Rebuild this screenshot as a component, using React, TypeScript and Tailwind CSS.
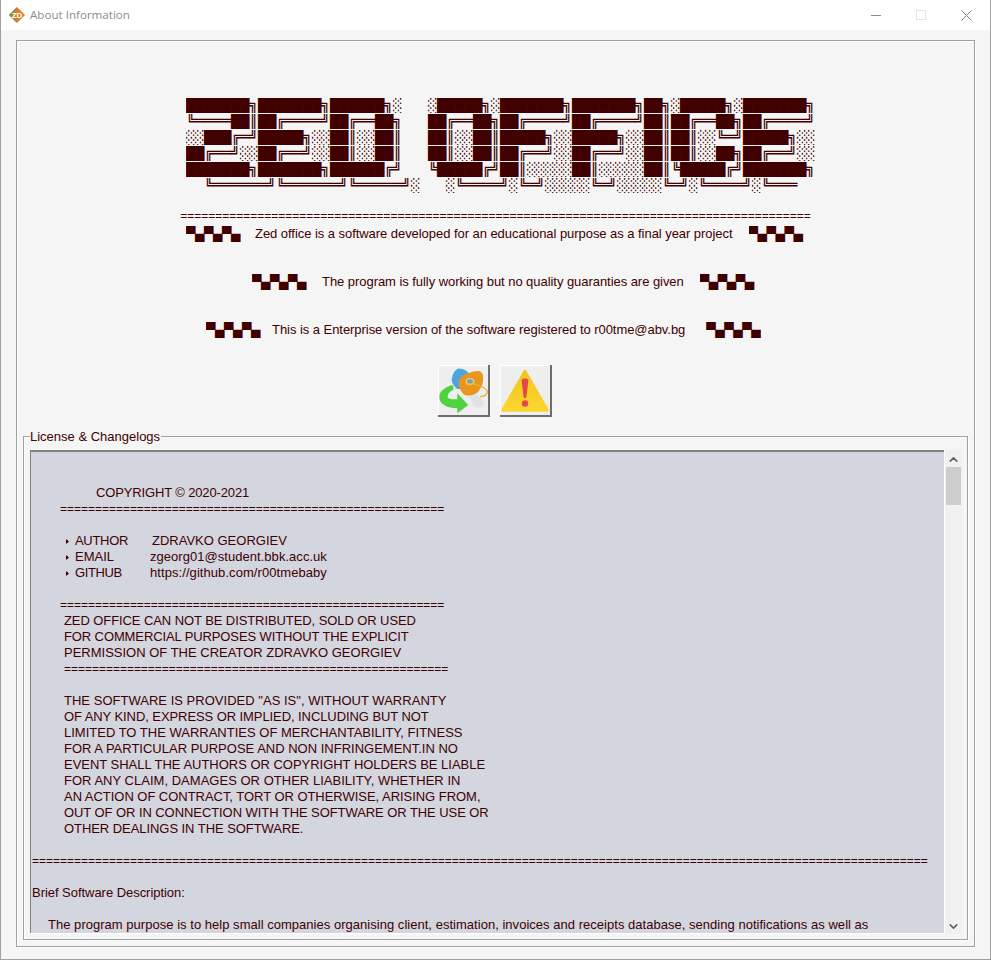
import { ChevronUp, ChevronDown } from 'lucide-react';

// each row is [ZED, OFFICE], the word gap is a bit narrower than 3 cells
const LOGO: [string, string, string][] = [
  ['███████╗███████╗██████╗░', '░█████╗░███████╗███████╗██╗░█████╗░███████╗', ''],
  ['╚════██║██╔════╝██╔══██╗', '██╔══██╗██╔════╝██╔════╝██║██╔══██╗██╔════╝', ''],
  ['░░███╔═╝█████╗░░██║░░██║', '██║░░██║█████╗░░█████╗░░██║██║░░╚═╝█████╗░░', ''],
  ['██╔══╝░░██╔══╝░░██║░░██║', '██║░░██║██╔══╝░░██╔══╝░░██║██║░░██╗██╔══╝░░', ''],
  ['███████╗███████╗██████╔╝', '╚█████╔╝██║░░░░░██║░░░░░██║╚█████╔╝███████╗', ''],
  ['╚══════╝╚══════╝╚═════╝░', '░╚════╝░╚═╝░░░░░╚═╝░░░░░╚═╝░╚════╝░╚═══', 'ml-[18px]'],
];

const CHECKER = '▀▄▀▄▀▄';

const LICENSE: { pad: number; text: string; rule?: boolean; bullet?: boolean; value?: string; ls?: number; valueLs?: number }[] = [
  { pad: 0, text: '' },
  { pad: 0, text: '' },
  { pad: 64, text: 'COPYRIGHT © 2020-2021', ls: -0.14 },
  { pad: 28, text: '='.repeat(55), rule: true, ls: -0.02 },
  { pad: 0, text: '' },
  { pad: 43, text: 'AUTHOR', bullet: true, value: 'ZDRAVKO GEORGIEV', ls: -0.3 },
  { pad: 43, text: 'EMAIL', bullet: true, value: 'zgeorg01@student.bbk.acc.uk', valueLs: 0.04 },
  { pad: 43, text: 'GITHUB', bullet: true, value: 'https://github.com/r00tmebaby', ls: -0.4, valueLs: 0.07 },
  { pad: 0, text: '' },
  { pad: 28, text: '='.repeat(55), rule: true, ls: -0.02 },
  { pad: 32, text: 'ZED OFFICE CAN NOT BE DISTRIBUTED, SOLD OR USED', ls: -0.085 },
  { pad: 32, text: 'FOR COMMERCIAL PURPOSES WITHOUT THE EXPLICIT', ls: -0.11 },
  { pad: 32, text: 'PERMISSION OF THE CREATOR ZDRAVKO GEORGIEV' },
  { pad: 32, text: '='.repeat(55), rule: true, ls: -0.02 },
  { pad: 0, text: '' },
  { pad: 32, text: 'THE SOFTWARE IS PROVIDED "AS IS", WITHOUT WARRANTY', ls: 0.02 },
  { pad: 32, text: 'OF ANY KIND, EXPRESS OR IMPLIED, INCLUDING BUT NOT', ls: -0.08 },
  { pad: 32, text: 'LIMITED TO THE WARRANTIES OF MERCHANTABILITY, FITNESS' },
  { pad: 32, text: 'FOR A PARTICULAR PURPOSE AND NON INFRINGEMENT.IN NO' },
  { pad: 32, text: 'EVENT SHALL THE AUTHORS OR COPYRIGHT HOLDERS BE LIABLE', ls: -0.02 },
  { pad: 32, text: 'FOR ANY CLAIM, DAMAGES OR OTHER LIABILITY, WHETHER IN', ls: 0.02 },
  { pad: 32, text: 'AN ACTION OF CONTRACT, TORT OR OTHERWISE, ARISING FROM,', ls: -0.036 },
  { pad: 32, text: 'OUT OF OR IN CONNECTION WITH THE SOFTWARE OR THE USE OR', ls: -0.07 },
  { pad: 32, text: 'OTHER DEALINGS IN THE SOFTWARE.', ls: -0.06 },
  { pad: 0, text: '' },
  { pad: 0, text: '='.repeat(128), rule: true, ls: -0.01 },
  { pad: 0, text: '' },
  { pad: 0, text: 'Brief Software Description:', ls: -0.04 },
  { pad: 0, text: '' },
  { pad: 16, text: 'The program purpose is to help small companies organising client, estimation, invoices and receipts database, sending notifications as well as', ls: 0.027 },
];

function Checker() {
  return <span className="mt-[2px] h-4 w-[55px] overflow-hidden font-['DejaVu_Sans_Mono',monospace] text-[15.5px] leading-4 tracking-[-0.332px]">{CHECKER}</span>;
}

function NoticeRow({ pad, gapL, gapR, text }: { pad: string; gapL: string; gapR: string; text: string }) {
  return (
    <div className={`flex h-4 items-center whitespace-pre ${pad}`}>
      <Checker />
      <span className={`${gapL} ${gapR} mt-[2px] text-[13px] tracking-[-0.05px]`}>{text}</span>
      <Checker />
    </div>
  );
}

function AppLogo() {
  return (
    <svg width="16" height="16" viewBox="0 0 16 16">
      <path d="M8 0L16 8L8 16L0 8Z" fill="#d9822b" />
      <path d="M0 8L8 16L4 8L8 0Z" fill="#7f9a3a" />
      <text x="8" y="11" textAnchor="middle" fontSize="8" fontWeight="700" fill="#fff" fontFamily="Liberation Sans, sans-serif">ZD</text>
    </svg>
  );
}

function UpdateIcon() {
  return (
    <svg width="50" height="50" viewBox="0 0 50 50" className="blur-[0.4px]">
      <path d="M20 3.5C25 3 30 6 32 10L28 24L19 24C15 20 13 16 14 13C15 8 17 5 20 3.5Z" fill="#4ba6df" />
      <path d="M28 28L38 28L46 37C47 41 42 43 38 42C35 41 34 37 32 33Z" fill="#e2e2e2" />
      <path d="M21 16C23 11 27 9 31 8C36 6 41 5 43 7C46 9 45.5 16 44 20C42 25 40 28 36 29.5C32 31 27 31 25 28.5C22 25 20 21 21 16Z" fill="#e8961d" />
      <ellipse cx="32" cy="16.5" rx="4.5" ry="3.5" fill="#f6c877" />
      <ellipse cx="32" cy="16.5" rx="3" ry="2.3" fill="#5fa9d8" />
      <path d="M30 18.3C38 19 48 22 49.5 26.7C49 30 45 31.5 42 31.7" fill="none" stroke="#eeb21c" strokeWidth="1.3" />
      <path d="M15.3 20C8 21 1.3 26 1.3 32C1.3 38 7 43 19.3 43.3L19.3 48.3L30.3 40L19.3 28.3L19.3 34.3C13 34.5 9.7 33.5 9.7 32C9.7 29 12 26 15.3 25Z" fill="#4fd23f" />
    </svg>
  );
}

function WarningIcon() {
  return (
    <svg width="52" height="50" viewBox="0 0 52 50" className="blur-[0.3px]">
      <defs>
        <linearGradient id="warn" x1="0" y1="0" x2="0" y2="1">
          <stop offset="0" stopColor="#f2c51f" />
          <stop offset="1" stopColor="#fcd62f" />
        </linearGradient>
      </defs>
      <path d="M26 4C27 4 27.5 5 28 6L50.5 45C51 47 50 47.5 49 47.5L3 47.5C2 47.5 1 47 1.5 45L24 6C24.5 5 25 4 26 4Z" fill="url(#warn)" />
      <path d="M22.5 15C23 12.5 29 12.5 29.5 15L27.5 32C27 34 25 34 24.5 32Z" fill="#e5484a" />
      <circle cx="26" cy="39" r="3.3" fill="#e5484a" />
    </svg>
  );
}

export default function App() {
  return (
    <div className="flex h-[960px] w-[991px] flex-col overflow-hidden border-x border-b border-[#a0a0a0] bg-[#f5f5f5] font-['Liberation_Sans',Arial,sans-serif] text-[12px] leading-4 text-[#400000]">
      {/* title bar */}
      <div className="flex h-[30px] shrink-0 items-center bg-white pl-[8px]">
        <AppLogo />
        <span className="ml-[5px] font-['Open_Sans',sans-serif] text-[11.6px] text-[#8c8c8c]">About Information</span>
        <div className="ml-auto flex items-center gap-[35px] pr-[18px]">
          <div className="h-px w-[10px] bg-[#8c8c8c]" />
          <div className="h-[10px] w-[10px] border border-[#e4e4e4]" />
          <svg width="11" height="11" viewBox="0 0 11 11" stroke="#808080" fill="none">
            <path d="M0.5 0.5L10.5 10.5M10.5 0.5L0.5 10.5" />
          </svg>
        </div>
      </div>

      {/* outer frame */}
      <div className="mx-[15px] mt-[10px] flex h-[907px] flex-col border border-[#a0a0a0] shadow-[1px_1px_0_#fff,inset_1px_1px_0_#fff]">
        <div className="mt-[57px] flex flex-col gap-px pl-[169px] font-['DejaVu_Sans_Mono',monospace] text-[15.5px] leading-[15px] tracking-[-0.332px] whitespace-pre">
          {LOGO.map(([zed, office, shift], i) => (
            <div key={i} className={`flex h-[15px] gap-[26px] overflow-hidden ${shift}`}>
              <span className="w-[216px] shrink-0">{zed}</span>
              <span>{office}</span>
            </div>
          ))}
        </div>

        <div className="mt-[15px] text-center leading-4">{'='.repeat(90)}</div>
        <div className="mt-px flex flex-col gap-8">
          <NoticeRow pad="pl-[169px]" gapL="ml-[14px]" gapR="mr-[16px]" text="Zed office is a software developed for an educational purpose as a final year project" />
          <NoticeRow pad="pl-[235px]" gapL="ml-[15px]" gapR="mr-[16px]" text="The program is fully working but no quality guaranties are given" />
          <NoticeRow pad="pl-[189px]" gapL="ml-[11px]" gapR="mr-[21px]" text="This is a Enterprise version of the software registered to r00tme@abv.bg" />
        </div>

        <div className="mt-[28px] flex justify-center gap-[10px] pr-px">
          <div className="flex h-[52px] w-[52px] items-center justify-center border-r-2 border-b-2 border-[#6e6e6e] bg-[#eeeeee] shadow-[inset_1px_1px_0_#fff]">
            <UpdateIcon />
          </div>
          <div className="flex h-[52px] w-[52px] items-center justify-center border-r-2 border-b-2 border-[#6e6e6e] bg-[#eeeeee] shadow-[inset_1px_1px_0_#fff]">
            <WarningIcon />
          </div>
        </div>

        {/* license group */}
        <div className="relative mx-[6px] mt-[19px] flex h-[504px] flex-col border border-[#a0a0a0] shadow-[1px_1px_0_#fff,inset_1px_1px_0_#fff]">
          <span className="absolute -top-2 left-[6px] bg-[#f5f5f5] pr-px text-[13px] leading-4">License &amp; Changelogs</span>
          <div className="mt-[13px] ml-[6px] flex h-[484px] w-[932px] bg-white">
            <div className="h-[483px] w-[914px] overflow-hidden border-t-2 border-l border-[#808080] bg-[#d3d6df] pt-px pl-[1px] text-[13px] whitespace-pre">
              {LICENSE.map((line, i) => (
                <div key={i} className={`flex h-4 items-center ${line.rule ? 'text-[12px]' : ''}`} style={{ paddingLeft: line.pad }}>
                  {line.bullet && (
                    <svg width="3" height="5" viewBox="0 0 3 5" className="mr-[6px] -ml-[9px]">
                      <path d="M0 0L3 2.5L0 5Z" fill="#400000" />
                    </svg>
                  )}
                  {line.value ? (
                    <>
                      <span className="w-[75px]" style={{ letterSpacing: line.ls }}>{line.text}</span>
                      <span className={line.text === 'AUTHOR' ? 'ml-[2px]' : ''} style={{ letterSpacing: line.valueLs }}>{line.value}</span>
                    </>
                  ) : (
                    <span style={{ letterSpacing: line.ls }}>{line.text}</span>
                  )}
                </div>
              ))}
            </div>
            <div className="ml-px flex h-full w-[17px] flex-col items-center bg-[#f0f0f0]">
              <ChevronUp size={13} strokeWidth={3} className="mt-[3px] text-[#606060]" />
              <div className="mt-[1px] h-[38px] w-[15px] bg-[#cdcdcd]" />
              <ChevronDown size={13} strokeWidth={3} className="mt-auto mb-[1px] text-[#606060]" />
            </div>
          </div>
        </div>
      </div>
    </div>
  );
}
